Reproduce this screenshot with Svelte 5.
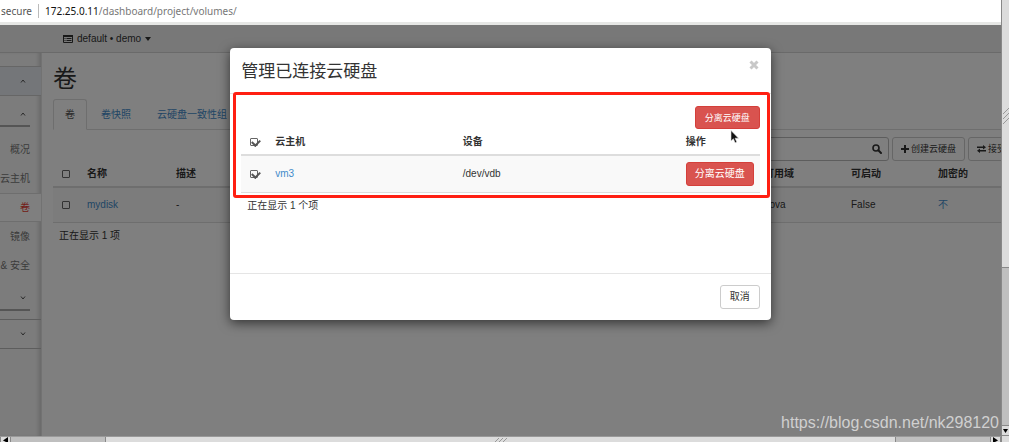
<script>
  const tabs = ['卷', '卷快照', '云硬盘一致性组'];
  const panels = ['概况', '云主机', '卷', '镜像', '& 安全'];

  let activeTab = '卷';
  let query = '';
  let allVolumes = false;
  let volumeSelected = false;
  let allAttachments = true;
  let attachmentSelected = true;
</script>

<div class="window">
  <div class="main">
    <header class="address">
      <span class="secure">t secure</span>
      <span class="url"><b>172.25.0.11</b>/dashboard/project/volumes/</span>
    </header>

    <div class="viewport">
      <nav class="topbar">
        <button class="project">
          <svg width="10" height="8" viewBox="0 0 10 8">
            <path d="M.5 .5h9v7h-9z" fill="none" stroke="#333" />
            <path d="M0 0h10v2H0zM1.500 3h1v1h-1zM3.500 3h5v1h-5zM1.500 5h1v1h-1zM3.500 5h5v1h-5z" fill="#333" />
          </svg>
          <span>default • demo</span>
          <svg width="6" height="4" viewBox="0 0 6 4"><path d="M0 0h6L3 4z" fill="#333" /></svg>
        </button>
      </nav>

      <div class="columns">
        <aside class="sidebar">
          <button class="group selected" aria-label="Project">
            <svg width="6" height="4" viewBox="0 0 6 4"><path d="M1 3.500L3 1l2 2.500" /></svg>
          </button>
          <button class="group open" aria-label="Compute">
            <svg width="6" height="4" viewBox="0 0 6 4"><path d="M1 3.500L3 1l2 2.500" /></svg>
          </button>
          {#each panels as panel}
            <a class="panel" class:current={panel === '卷'} href="#panel">{panel}</a>
          {/each}
          <button class="group closed" aria-label="Network">
            <svg width="6" height="4" viewBox="0 0 6 4"><path d="M1 .5L3 3l2-2.500" /></svg>
          </button>
          <button class="group last" aria-label="Identity">
            <svg width="6" height="4" viewBox="0 0 6 4"><path d="M1 .5L3 3l2-2.500" /></svg>
          </button>
        </aside>

        <section class="content">
          <h1>卷</h1>
          <div class="tabs">
            {#each tabs as tab}
              <a href="#tab" class:active={tab === activeTab} on:click={() => (activeTab = tab)}>{tab}</a>
            {/each}
          </div>
          <div class="toolbar">
            <div class="search">
              <input type="text" aria-label="Filter" bind:value={query} />
              <svg width="10" height="10" viewBox="0 0 10 10" fill="none" stroke="#333">
                <circle cx="4" cy="4" r="3" stroke-width="1.600" />
                <path d="M6.300 6.300L9 9" stroke-width="2" stroke-linecap="round" />
              </svg>
            </div>
            <button class="btn">
              <svg width="8" height="8" viewBox="0 0 8 8"><path d="M3 0h2v3h3v2H5v3H3V5H0V3h3z" fill="#333" /></svg>
              创建云硬盘
            </button>
            <button class="btn">
              <svg width="9" height="8" viewBox="0 0 9 8"><path d="M0 1.500h6V0l3 2.200-3 2.200V3H0zM9 5H3V3.600L0 5.800 3 8V6.500h6z" fill="#333" /></svg>
              接受转让
            </button>
          </div>
          <table class="volumes">
            <colgroup>
              <col class="c-check" /><col class="c-name" /><col />
              <col class="c-mid" /><col class="c-mid" /><col class="c-end" />
            </colgroup>
            <thead>
              <tr>
                <th><input type="checkbox" aria-label="Select all volumes" bind:checked={allVolumes} /></th>
                <th>名称</th><th>描述</th><th>可用域</th><th>可启动</th><th>加密的</th>
              </tr>
            </thead>
            <tbody>
              <tr>
                <td><input type="checkbox" aria-label="Select mydisk" bind:checked={volumeSelected} /></td>
                <td><a href="#mydisk">mydisk</a></td>
                <td>-</td>
                <td>nova</td>
                <td>False</td>
                <td><a href="#encrypted">不</a></td>
              </tr>
            </tbody>
          </table>
          <p class="count">正在显示 1 项</p>
        </section>
      </div>

      <div class="backdrop">
        <div class="modal" role="dialog" aria-labelledby="modal-title">
          <div class="modal-header">
            <h2 id="modal-title">管理已连接云硬盘</h2>
            <button class="close" aria-label="Close">
              <svg width="10" height="10" viewBox="0 0 10 10"><path d="M1.500 1.500l7 7M8.500 1.500l-7 7" stroke="#c8c8c8" stroke-width="3" /></svg>
            </button>
          </div>
          <div class="modal-body">
            <div class="actions"><button class="btn danger small">分离云硬盘</button></div>
            <table class="attachments">
              <colgroup><col class="c-check" /><col /><col class="c-device" /><col class="c-action" /></colgroup>
              <thead>
                <tr>
                  <th><input type="checkbox" aria-label="Select all instances" bind:checked={allAttachments} /></th>
                  <th>云主机</th><th>设备</th><th>操作</th>
                </tr>
              </thead>
              <tbody>
                <tr>
                  <td><input type="checkbox" aria-label="Select vm3" bind:checked={attachmentSelected} /></td>
                  <td><a href="#vm3">vm3</a></td>
                  <td>/dev/vdb</td>
                  <td><button class="btn danger">分离云硬盘</button></td>
                </tr>
              </tbody>
            </table>
            <p class="count">正在显示 1 个项</p>
          </div>
          <div class="modal-footer"><button class="btn">取消</button></div>
          <div class="highlight"></div>
          <svg class="pointer" width="10" height="14" viewBox="0 0 10 14">
            <path d="M1 .5v10.500l2.400-2.200 1.700 4 1.700-.7-1.700-3.900h3.400z" fill="#111" stroke="#ddd" stroke-width=".6" />
          </svg>
        </div>
      </div>
      <div class="watermark">https://blog.csdn.net/nk298120</div>
    </div>

    <div class="hbar">
      <div class="arrow"><svg width="5" height="6" viewBox="0 0 5 6"><path d="M5 0v6L0 3.500z" /></svg></div>
      <div class="h-space"></div>
      <div class="h-thumb">
        <svg width="14" height="5" viewBox="0 0 14 5"><path d="M1 5l4-4M5 5l4-4M9 5l4-4" /></svg>
      </div>
      <div class="h-space"></div>
      <div class="arrow"><svg width="5" height="6" viewBox="0 0 5 6"><path d="M0 0v6l5-2.500z" /></svg></div>
    </div>
  </div>

  <div class="vbar">
    <div class="v-thumb">
      <svg width="6" height="16" viewBox="0 0 6 16"><path d="M0 6l6-6M0 11l6-6M0 16l6-6" /></svg>
    </div>
    <div class="v-space"></div>
    <div class="arrow"><svg width="5" height="4" viewBox="0 0 5 4"><path d="M0 0h5L2.500 4z" /></svg></div>
    <div class="corner"></div>
  </div>
</div>

<style>
  :global(body) {
    overflow: hidden;
  }
  .window {
    display: flex;
    height: 100vh;
    color: #333;
    font: 10px/14px "Liberation Sans", "Noto Sans CJK SC", sans-serif;
  }
  .window * {
    box-sizing: border-box;
  }
  .main {
    flex: 1;
    min-width: 0;
    display: flex;
    flex-direction: column;
  }
  button,
  input {
    font: inherit;
    color: inherit;
    margin: 0;
  }
  a {
    color: #428bca;
    text-decoration: none;
  }

  .address {
    display: flex;
    align-items: center;
    height: 25px;
    padding-bottom: 1px;
    background: #fff;
    border-bottom: 3px solid #e6e7e5;
    font-family: "Noto Sans", sans-serif;
    color: #777;
    overflow: hidden;
  }
  .secure {
    display: flex;
    justify-content: flex-end;
    width: 39px;
    padding-right: 6px;
    border-right: 1px solid #bbb;
    white-space: nowrap;
    color: #555;
  }
  .url {
    padding-left: 6px;
  }
  .url b {
    font-weight: 400;
    color: #111;
  }

  .viewport {
    position: relative;
    flex: 1;
    min-height: 0;
    display: flex;
    flex-direction: column;
    overflow: hidden;
    background: #fff;
  }
  .topbar {
    height: 28px;
    padding-left: 63px;
    display: flex;
    background: #f0f0f0;
    border-bottom: 1px solid #d4d4d4;
  }
  .project {
    display: flex;
    align-items: center;
    gap: 4px;
    border: 0;
    padding: 0;
    background: none;
  }
  .columns {
    flex: 1;
    display: flex;
  }

  .sidebar {
    width: 42px;
    flex: none;
    padding-top: 13px;
    background: #f9f9f9;
    border-right: 1px solid #e4e4e4;
    box-shadow: inset -4px 0 4px -2px #ccc;
  }
  .group {
    display: flex;
    justify-content: flex-end;
    align-items: center;
    width: 100%;
    height: 30px;
    padding: 0 15px 0 0;
    border: 0;
    background: none;
  }
  .group svg {
    fill: none;
    stroke: #555;
  }
  .selected {
    background: #e8edf3;
    border-top: 1px solid #ccc;
    border-bottom: 1px solid #ccc;
  }
  .open,
  .closed {
    width: 30px;
    height: 31px;
    padding: 6px 4px 0 0;
    border-bottom: 2px solid #aaa;
  }
  .open {
    margin-bottom: 8px;
  }
  .closed {
    margin-bottom: 8px;
  }
  .last {
    border-top: 1px solid #bbb;
    border-bottom: 1px solid #bbb;
  }
  .panel {
    display: flex;
    justify-content: flex-end;
    align-items: center;
    height: 29px;
    padding-right: 11px;
    white-space: nowrap;
    color: #777;
  }
  .panel.current {
    color: #e6392f;
    background: #fff;
    border-top: 1px solid #ddd;
    border-bottom: 1px solid #ddd;
  }

  .content {
    flex: 1;
    min-width: 0;
    padding: 9px 0 0 11px;
  }
  h1 {
    margin: 0 0 3px;
    font-size: 24px;
    line-height: 34px;
    font-weight: 400;
  }
  .tabs {
    display: flex;
    height: 31px;
    border-bottom: 1px solid #ddd;
  }
  .tabs a {
    height: 31px;
    padding: 8px 11px 0;
    margin-right: 2px;
    border: 1px solid transparent;
    border-radius: 3px 3px 0 0;
  }
  .tabs a.active {
    color: #555;
    background: #fff;
    border-color: #ddd;
    border-bottom-color: #fff;
  }
  .toolbar {
    display: flex;
    justify-content: flex-end;
    gap: 3px;
    padding-top: 7px;
    margin-right: -32px;
  }
  .search {
    display: flex;
    align-items: center;
    width: 200px;
    height: 24px;
    padding: 0 6px;
    border: 1px solid #bbb;
    border-radius: 3px;
  }
  .search input {
    flex: 1;
    min-width: 0;
    border: 0;
    padding: 0;
    background: none;
    outline: 0;
  }
  .btn {
    display: inline-flex;
    align-items: center;
    gap: 2px;
    height: 24px;
    padding: 0 9px;
    border: 1px solid #ccc;
    border-radius: 3px;
    background: #fff;
    white-space: nowrap;
  }
  .toolbar .btn {
    padding: 0 8px;
    font-size: 9px;
  }

  table {
    width: 100%;
    table-layout: fixed;
    border-collapse: separate;
    border-spacing: 0;
  }
  th,
  td {
    padding: 0;
    text-align: left;
    vertical-align: middle;
  }
  th {
    height: 27px;
    padding-top: 1px;
    border-bottom: 2px solid #ddd;
  }
  td {
    height: 35px;
    background: #f9f9f9;
    border-bottom: 1px solid #ddd;
  }
  th:first-child,
  td:first-child {
    padding-left: 9px;
  }
  .c-check {
    width: 34px;
  }
  .c-name {
    width: 89px;
  }
  .c-mid {
    width: 87px;
  }
  .c-end {
    width: 63px;
  }
  .count {
    margin: 0;
    padding: 6px;
  }
  input[type='checkbox'] {
    display: block;
    appearance: none;
    position: relative;
    width: 8px;
    height: 8px;
    border: 1px solid #666;
    border-radius: 1px;
  }
  input[type='checkbox']:checked::after {
    content: '';
    position: absolute;
    left: 2px;
    top: -1px;
    width: 4px;
    height: 6px;
    border: solid #555;
    border-width: 0 2px 2px 0;
    transform: rotate(45deg);
  }

  .backdrop {
    position: absolute;
    inset: 0;
    display: flex;
    justify-content: center;
    align-items: flex-start;
    padding-top: 23px;
    background: rgba(0, 0, 0, 0.5);
  }
  .modal {
    position: relative;
    width: 54%;
    background: #fff;
    border-radius: 4px;
    box-shadow: 0 3px 12px rgba(0, 0, 0, 0.6);
  }
  .modal-header {
    display: flex;
    justify-content: space-between;
    align-items: flex-start;
    padding: 12px 11px 9px;
    border-bottom: 1px solid #e5e5e5;
  }
  h2 {
    margin: 0;
    font-size: 17px;
    line-height: 24px;
    font-weight: 400;
  }
  .close {
    display: flex;
    border: 0;
    padding: 0 1px;
    background: none;
  }
  .modal-body {
    padding: 12px 11px 54px;
  }
  .actions {
    display: flex;
    justify-content: flex-end;
  }
  .c-device {
    width: 223px;
  }
  .c-action {
    width: 74px;
  }
  .danger {
    color: #fff;
    background: #d9534f;
    border-color: #d43f3a;
  }
  .attachments td {
    height: 37px;
  }
  .attachments td .btn {
    display: flex;
    padding: 0 8px;
  }
  .small {
    height: 23px;
    font-size: 9px;
  }
  .modal-footer {
    display: flex;
    justify-content: flex-end;
    padding: 11px;
    border-top: 1px solid #e5e5e5;
  }
  .highlight {
    position: absolute;
    inset: 44px 1px 122px 3px;
    border: 3px solid #ff1f12;
    border-radius: 3px;
    pointer-events: none;
  }
  .pointer {
    position: absolute;
    right: 31px;
    top: 82px;
  }
  .watermark {
    position: absolute;
    right: 2px;
    bottom: 4px;
    font-size: 16px;
    line-height: 18px;
    color: #d0d0d0;
  }

  .hbar {
    display: flex;
    height: 6px;
    background: #bfbfbf;
    border-top: 1px solid #999;
    overflow: hidden;
  }
  .h-space,
  .v-space {
    flex: 1;
  }
  .h-thumb {
    width: 79%;
    display: flex;
    justify-content: center;
    background: #dcdcdc;
    border: solid #888;
    border-width: 0 1px;
  }
  .h-thumb svg,
  .v-thumb svg {
    fill: none;
    stroke: #999;
  }
  .arrow {
    display: flex;
    align-items: center;
    justify-content: center;
    width: 11px;
    background: #dcdcdc;
    border: solid #888;
    border-width: 0 1px;
  }
  .vbar {
    width: 8px;
    flex: none;
    display: flex;
    flex-direction: column;
    background: #bfbfbf;
    border-left: 1px solid #888;
  }
  .v-thumb {
    height: 268px;
    padding: 108px 0 0 1px;
    background: #dcdcdc;
    border-bottom: 1px solid #888;
  }
  .vbar .arrow {
    width: 100%;
    height: 11px;
    border-width: 1px 0;
  }
  .corner {
    height: 6px;
    background: #dcdcdc;
  }
</style>
